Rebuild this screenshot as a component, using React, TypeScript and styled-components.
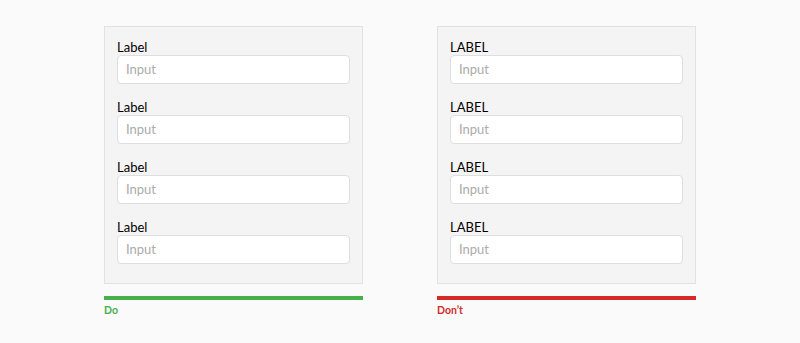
import styled, { createGlobalStyle } from "styled-components";

const GlobalStyle = createGlobalStyle`
  body {
    margin: 0;
    background: #fafafa;
    font-family: Lato, "Liberation Sans", sans-serif;
  }
`;

const Page = styled.div`
  display: flex;
  justify-content: center;
  gap: 74px;
  padding-top: 26px;
  height: 343px;
  box-sizing: border-box;
`;

const Column = styled.div`
  width: 259px;
`;

const Panel = styled.div`
  display: flex;
  flex-direction: column;
  gap: 15px;
  padding: 12px 12px 19px 12px;
  background: #f4f4f4;
  border: 1px solid #e2e2e2;
`;

const Field = styled.div`
  display: flex;
  flex-direction: column;
`;

const Label = styled.label<{ $upper?: boolean }>`
  font-size: 13px;
  line-height: 16px;
  color: #000;
  text-transform: ${(p) => (p.$upper ? "uppercase" : "none")};
`;

const Input = styled.input`
  box-sizing: border-box;
  height: 29px;
  width: 100%;
  padding: 0 8px 2px;
  font-family: Lato, "Liberation Sans", sans-serif;
  font-size: 13px;
  background: #fff;
  border: 1px solid #dedede;
  border-radius: 4px;
  outline: none;
  &::placeholder {
    color: #ababab;
  }
`;

const Bar = styled.div<{ $color: string }>`
  margin-top: 12px;
  height: 4px;
  background: ${(p) => p.$color};
`;

const Caption = styled.div<{ $color: string }>`
  margin-top: 4px;
  font-size: 10.5px;
  line-height: 12px;
  font-weight: 700;
  color: ${(p) => p.$color};
`;

function Example({ upper, color, caption }: { upper?: boolean; color: string; caption: string }) {
  return (
    <Column>
      <Panel>
        {[0, 1, 2, 3].map((i) => (
          <Field key={i}>
            <Label $upper={upper}>Label</Label>
            <Input placeholder="Input" />
          </Field>
        ))}
      </Panel>
      <Bar $color={color} />
      <Caption $color={color}>{caption}</Caption>
    </Column>
  );
}

export default function App() {
  return (
    <>
      <GlobalStyle />
      <Page>
        <Example color="#46b04a" caption="Do" />
        <Example upper color="#d42a2a" caption="Don’t" />
      </Page>
    </>
  );
}
